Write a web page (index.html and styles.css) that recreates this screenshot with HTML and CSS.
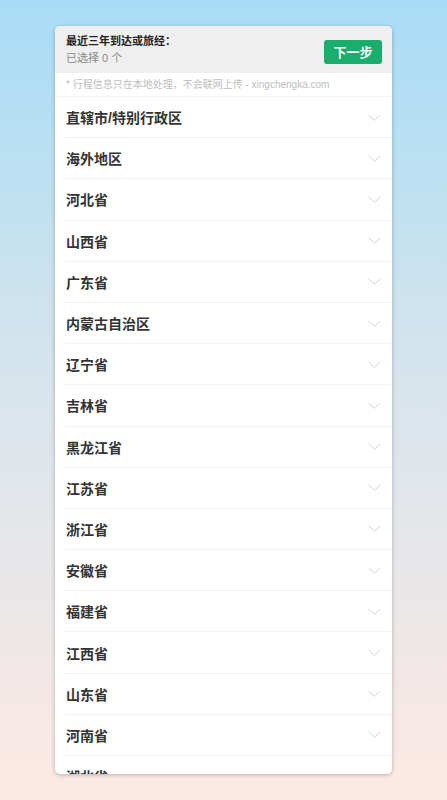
FILE: index.html
```html
<!DOCTYPE html>
<html lang="zh">
<head>
<meta charset="utf-8">
<link rel="stylesheet" href="styles.css">
</head>
<body>
<div class="page">
  <div class="card">
    <div class="header">
      <div class="header-text">
        <div class="title">最近三年到达或旅经：</div>
        <div class="count">已选择 0 个</div>
      </div>
      <button class="next">下一步</button>
    </div>
    <div class="note">* 行程信息只在本地处理，不会联网上传 - xingchengka.com</div>
    <ul class="list">
      <li class="row"><span>直辖市/特别行政区</span><svg class="chev" viewBox="0 0 14 7"><path d="M0.5 0.5 L7 6.5 L13.5 0.5"/></svg></li>
      <li class="row"><span>海外地区</span><svg class="chev" viewBox="0 0 14 7"><path d="M0.5 0.5 L7 6.5 L13.5 0.5"/></svg></li>
      <li class="row"><span>河北省</span><svg class="chev" viewBox="0 0 14 7"><path d="M0.5 0.5 L7 6.5 L13.5 0.5"/></svg></li>
      <li class="row"><span>山西省</span><svg class="chev" viewBox="0 0 14 7"><path d="M0.5 0.5 L7 6.5 L13.5 0.5"/></svg></li>
      <li class="row"><span>广东省</span><svg class="chev" viewBox="0 0 14 7"><path d="M0.5 0.5 L7 6.5 L13.5 0.5"/></svg></li>
      <li class="row"><span>内蒙古自治区</span><svg class="chev" viewBox="0 0 14 7"><path d="M0.5 0.5 L7 6.5 L13.5 0.5"/></svg></li>
      <li class="row"><span>辽宁省</span><svg class="chev" viewBox="0 0 14 7"><path d="M0.5 0.5 L7 6.5 L13.5 0.5"/></svg></li>
      <li class="row"><span>吉林省</span><svg class="chev" viewBox="0 0 14 7"><path d="M0.5 0.5 L7 6.5 L13.5 0.5"/></svg></li>
      <li class="row"><span>黑龙江省</span><svg class="chev" viewBox="0 0 14 7"><path d="M0.5 0.5 L7 6.5 L13.5 0.5"/></svg></li>
      <li class="row"><span>江苏省</span><svg class="chev" viewBox="0 0 14 7"><path d="M0.5 0.5 L7 6.5 L13.5 0.5"/></svg></li>
      <li class="row"><span>浙江省</span><svg class="chev" viewBox="0 0 14 7"><path d="M0.5 0.5 L7 6.5 L13.5 0.5"/></svg></li>
      <li class="row"><span>安徽省</span><svg class="chev" viewBox="0 0 14 7"><path d="M0.5 0.5 L7 6.5 L13.5 0.5"/></svg></li>
      <li class="row"><span>福建省</span><svg class="chev" viewBox="0 0 14 7"><path d="M0.5 0.5 L7 6.5 L13.5 0.5"/></svg></li>
      <li class="row"><span>江西省</span><svg class="chev" viewBox="0 0 14 7"><path d="M0.5 0.5 L7 6.5 L13.5 0.5"/></svg></li>
      <li class="row"><span>山东省</span><svg class="chev" viewBox="0 0 14 7"><path d="M0.5 0.5 L7 6.5 L13.5 0.5"/></svg></li>
      <li class="row"><span>河南省</span><svg class="chev" viewBox="0 0 14 7"><path d="M0.5 0.5 L7 6.5 L13.5 0.5"/></svg></li>
      <li class="row"><span>湖北省</span><svg class="chev" viewBox="0 0 14 7"><path d="M0.5 0.5 L7 6.5 L13.5 0.5"/></svg></li>
      <li class="row"><span>湖南省</span><svg class="chev" viewBox="0 0 14 7"><path d="M0.5 0.5 L7 6.5 L13.5 0.5"/></svg></li>
    </ul>
  </div>
</div>
</body>
</html>
```
FILE: styles.css
```css
* { box-sizing: border-box; }
html, body {
  margin: 0;
  padding: 0;
  height: 800px;
  overflow: hidden;
}
body {
  font-family: "Liberation Sans", "Noto Sans CJK SC", sans-serif;
  background: linear-gradient(to bottom, #a8dcf6 0%, #d9e5ec 50%, #fde9e4 100%);
}
.page {
  display: flex;
  justify-content: center;
  padding-top: 26px;
}
.card {
  width: 337px;
  height: 748px;
  background: #fff;
  border-radius: 5px;
  box-shadow: 0 1px 4px rgba(0,0,0,0.25);
  overflow: hidden;
  display: flex;
  flex-direction: column;
}
.header {
  background: #efefef;
  height: 47px;
  display: flex;
  align-items: center;
  justify-content: space-between;
  padding: 0 10px 0 11px;
  flex: none;
}
.header-text {
  display: flex;
  flex-direction: column;
  gap: 2px;
  padding-top: 1px;
}
.title {
  font-size: 11px;
  font-weight: bold;
  color: #222;
  line-height: 15px;
}
.count {
  font-size: 11px;
  color: #8a8a8a;
  line-height: 15px;
}
.next {
  width: 58px;
  height: 24px;
  border: none;
  border-radius: 3px;
  background: #1aad6b;
  color: #fff;
  font-family: inherit;
  font-size: 13px;
  font-weight: bold;
  padding: 0;
  margin-top: 4px;
}
.note {
  height: 24px;
  flex: none;
  padding: 0 11px;
  font-size: 10px;
  color: #bdbdbd;
  line-height: 23px;
  border-bottom: 1px solid #f2f2f2;
}
.list {
  list-style: none;
  margin: 0;
  padding: 0 0 0 10px;
  flex: none;
}
.row {
  height: 41.2px;
  display: flex;
  align-items: center;
  justify-content: space-between;
  padding: 0 11px 0 1px;
  border-bottom: 1px solid #f2f2f2;
  font-size: 14px;
  font-weight: bold;
  color: #333;
}
.chev {
  width: 13px;
  height: 7px;
  fill: none;
  stroke: #cfcfcf;
  stroke-width: 1;
}
```
